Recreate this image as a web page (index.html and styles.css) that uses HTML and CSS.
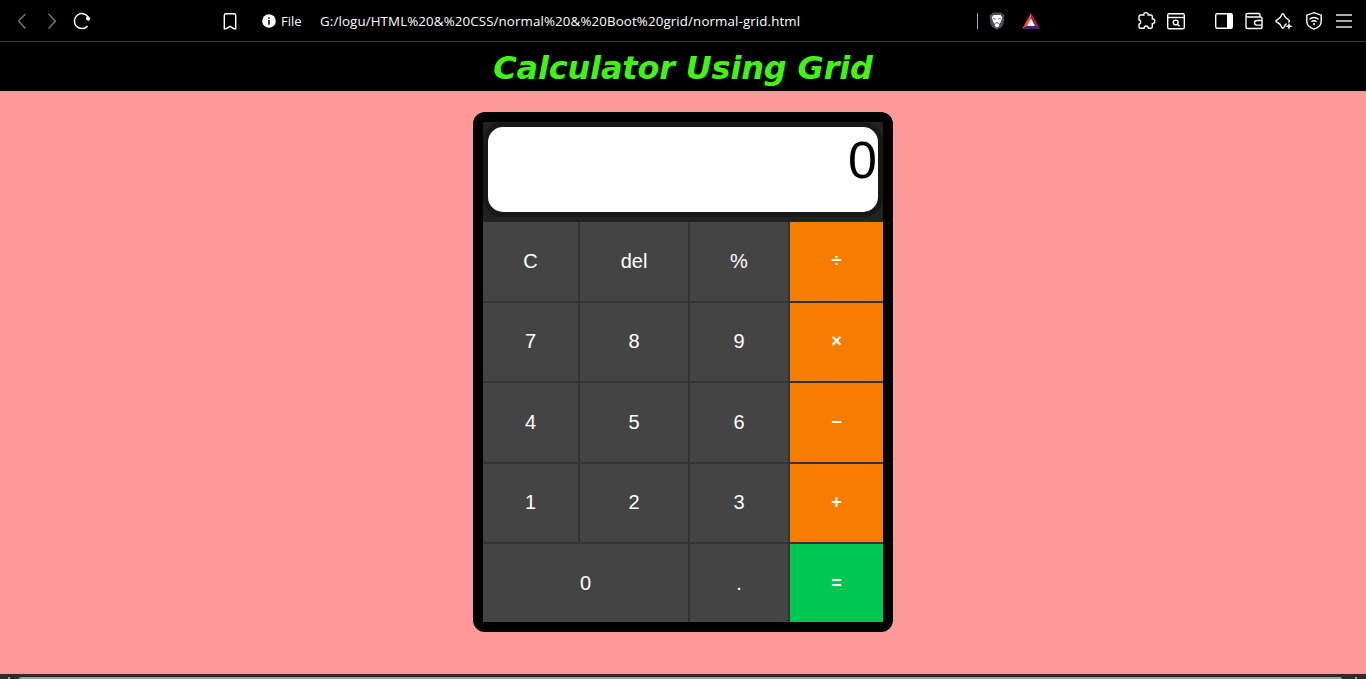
FILE: index.html
```html
<!DOCTYPE html>
<html lang="en">
<head>
<meta charset="utf-8">
<title>Calculator Using Grid</title>
<link rel="stylesheet" href="styles.css">
</head>
<body>
<div class="toolbar">
  <div class="nav">
    <svg class="dim" width="20" height="20" viewBox="0 0 20 20"><path d="M13.500 3 6.500 10l7 7.500"/></svg>
    <svg class="dim" width="20" height="20" viewBox="0 0 20 20"><path d="M6.500 3l7 7-7 7.500"/></svg>
    <svg class="reload" width="20" height="20" viewBox="0 0 20 20"><path d="M15.600 15A7.500 7.500 0 1 1 16.200 6"/><circle class="solid" cx="16" cy="7.500" r="2"/><path class="solid" d="M14 7h4.500l-2 3z"/></svg>
  </div>
  <svg class="bookmark" width="20" height="20" viewBox="0 0 20 20"><path d="M6 2.700h8q1.700 0 1.700 1.700v13.300h-1.700L10 15.300l-4 2.400H4.300V4.400q0-1.700 1.700-1.700z"/></svg>
  <div class="address">
    <svg class="info" width="14" height="14" viewBox="0 0 14 14"><circle class="disc" cx="7" cy="7" r="6.800"/><path class="mark" d="M7 3.200v1.500M7 6v4.800"/></svg>
    <span class="scheme">File</span>
    <span class="url">G:/logu/HTML%20&amp;%20CSS/normal%20&amp;%20Boot%20grid/normal-grid.html</span>
  </div>
  <span class="divider"></span>
  <svg class="lion" width="16" height="18" viewBox="0 0 16 18"><path class="shield" d="M4 .5h8l3.500 3-1 8.500-1.800 3L8 17.800 3.300 15 1.500 12l-1-8.500z"/><path class="face" d="M4.500 3h7l1.800 2.500-1.800 5-1.500 1.800.3 1.700L8 15.500 5.700 14l.3-1.700-1.500-1.800-1.800-5z"/><path class="lines" d="m4.200 6.200 2.300 1M11.800 6.200l-2.300 1M6.200 11.500 8 10.500l1.800 1"/></svg>
  <svg class="rewards" width="18" height="16" viewBox="0 0 18 16"><path class="r1" d="M9 0 0 16l5.500-3L9 6.500z"/><path class="r2" d="m9 0 9 16-5.500-3L9 6.500z"/><path class="r3" d="m0 16 5.500-3h7l5.500 3z"/><path class="r4" d="m9 5.500 4 7.500H5z"/></svg>
  <div class="tools">
    <svg class="puzzle" width="20" height="20" viewBox="0 0 20 20"><path d="M4.500 4h3.300c-.6-3.200 4.900-3.200 4.400 0h2.600q1.500 0 1.500 1.500v2.300c3.300.2 3.300 4.700 0 4.900v3.100q0 1.500-1.500 1.500h-2.300c-.5-3-4-3-4.500 0H4.500Q3 17.300 3 15.800v-2.600c2.300-.5 2.300-3.900 0-4.400V5.500Q3 4 4.500 4z"/></svg>
    <svg class="findpage" width="20" height="20" viewBox="0 0 20 20"><rect x="1.700" y="2.700" width="16.600" height="15" rx="1.500"/><path d="M2 6.500h16"/><circle cx="9.700" cy="11.500" r="2.400"/><path d="m11.500 13.200 2 2"/></svg>
    <svg class="panel" width="20" height="20" viewBox="0 0 20 20"><rect x="1.700" y="2.700" width="16.600" height="14.600" rx="1.500"/><path class="solid" d="M13 3h5v14h-5z"/></svg>
    <svg width="20" height="20" viewBox="0 0 20 20"><path d="M2 4v11.700q0 1.800 1.800 1.800h12.400q1.800 0 1.800-1.800V7.500q0-1.500-1.800-1.500H4Q2 6 2 4.200t2-1.700h10.500q1.500 0 1.500 1.500v2"/><path d="M18 9.500h-5q-2.500 0-2.500 2.300t2.500 2.300h5"/></svg>
    <svg class="spark" width="20" height="20" viewBox="0 0 20 20"><path d="M12.700 12.700Q11 13.500 10.300 15.500 8.800 19 7.400 15.500 6.300 12.600 3.500 11.500 0 10 3.500 8.600 6.300 7.500 7.400 4.600 8.800 1 10.300 4.600 11.400 7.500 14.200 8.600q2.800 1.300 0 2.700"/><path class="solid" d="m15 11.700 1 2.600 2.700 1-2.700 1-1 2.600-1-2.600-2.700-1 2.700-1z"/></svg>
    <svg width="20" height="20" viewBox="0 0 20 20"><path d="m10 1.700 7.200 2.500v6.300c0 4-4 6.600-7.200 7.700-3.200-1.100-7.200-3.700-7.200-7.700V4.200z"/><path d="M5.500 8.200q4.500-3.500 9 0M7.400 10.700q2.600-2 5.200 0"/><circle class="solid" cx="10" cy="12.900" r="1"/></svg>
    <svg class="menu" width="20" height="20" viewBox="0 0 20 20"><path d="M2 4h16M2 10h16M2 16h16"/></svg>
  </div>
</div>
<header class="title"><h1>Calculator Using Grid</h1></header>
<main class="page">
  <div class="calculator">
    <div class="screen"><div class="display">0</div></div>
    <div class="keys">
      <div class="key">C</div><div class="key">del</div><div class="key">%</div><div class="key op">÷</div>
      <div class="key">7</div><div class="key">8</div><div class="key">9</div><div class="key op">×</div>
      <div class="key">4</div><div class="key">5</div><div class="key">6</div><div class="key op">−</div>
      <div class="key">1</div><div class="key">2</div><div class="key">3</div><div class="key op">+</div>
      <div class="key wide">0</div><div class="key">.</div><div class="key equals">=</div>
    </div>
  </div>
</main>
<div class="scrollbar"><span class="arrow left"></span><span class="thumb"></span><span class="arrow right"></span></div>
</body>
</html>
```
FILE: styles.css
```css
* { box-sizing: border-box; }
body {
  margin: 0;
  height: 679px;
  display: flex;
  flex-direction: column;
  overflow: hidden;
  background: #ff9999;
  font-family: "Liberation Sans", Arial, sans-serif;
}
svg { display: block; flex: none; fill: none; stroke: #fff; stroke-width: 1.4; }
.solid { fill: #fff; stroke: none; }
.toolbar {
  flex: none;
  height: 42px;
  display: flex;
  align-items: center;
  background: #000;
  border-bottom: 1px solid #3b3b3b;
  padding: 0 12px;
  color: #fff;
}
.nav { display: flex; gap: 10px; }
.dim { stroke: #777; }
.reload { stroke-width: 1.5; }
.bookmark { margin-left: 128px; }
.address {
  display: flex;
  align-items: center;
  width: 737px;
  padding-left: 22px;
  font: 13px "Open Sans", "Noto Sans", sans-serif;
  white-space: nowrap;
}
.info .disc { fill: #fff; stroke: none; }
.info .mark { stroke: #000; stroke-width: 1.5; }
.scheme { margin-left: 5px; width: 39px; }
.url { font-size: 13.3px; letter-spacing: .13px; }
.divider { width: 1px; height: 16px; background: #aaa; margin-right: 11px; }
.lion { stroke: none; }
.shield { fill: #4b4d60; }
.face { fill: #fff; }
.lines { stroke: #4b4d60; stroke-width: 1; }
.rewards { margin-left: 17px; stroke: none; }
.r1 { fill: #ff4724; }
.r2 { fill: #9e1f63; }
.r3 { fill: #4a1e78; }
.r4 { fill: #fff; }
.tools { display: flex; gap: 10px; margin-left: auto; }
.findpage { margin-right: 18px; }
.menu { stroke: #aaa; stroke-width: 2; }
.title {
  flex: none;
  height: 49px;
  background: #000;
  display: flex;
  justify-content: center;
  align-items: center;
}
.title h1 {
  margin: 4px 0 0;
  font: italic bold 32px/39px Verdana, "DejaVu Sans", sans-serif;
  letter-spacing: -.18px;
  color: #41f413;
  white-space: nowrap;
}
.page { height: 583px; flex: none; display: flex; justify-content: center; align-items: flex-start; padding-top: 21.4px; }
.calculator { width: 420px; height: 520px; border: 10px solid #000; border-radius: 12px; background: #333; }
.screen { height: 100px; background: #222; }
.display {
  height: 95px;
  border: 5px solid #191816;
  border-radius: 20px;
  background: #fff;
  padding: 2px 1px 0 0;
  text-align: right;
  font-size: 52px;
  line-height: 62px;
  color: #000;
}
.keys {
  height: 400px;
  display: grid;
  grid-template-columns: 95px 108px 98px 93px;
  grid-template-rows: repeat(5, 1fr);
  gap: 2px;
}
.key { display: flex; justify-content: center; align-items: center; background: #444; color: #fff; font-size: 20px; }
.op, .equals { font-size: 18px; font-weight: bold; }
.op { background: #f77d00; }
.equals { background: #00c853; }
.wide { grid-column: span 2; }
.scrollbar { flex: none; height: 5px; background: #2c2c2c; display: flex; padding-top: 3px; }
.arrow { width: 19px; height: 2px; }
.arrow::after { content: ""; display: block; width: 2px; height: 2px; margin-left: 8px; background: #9f9f9f; }
.right { width: 24px; }
.right::after { margin-left: 13px; }
.thumb { flex: 1; background: #9f9f9f; border-radius: 3px 3px 0 0; }
```
